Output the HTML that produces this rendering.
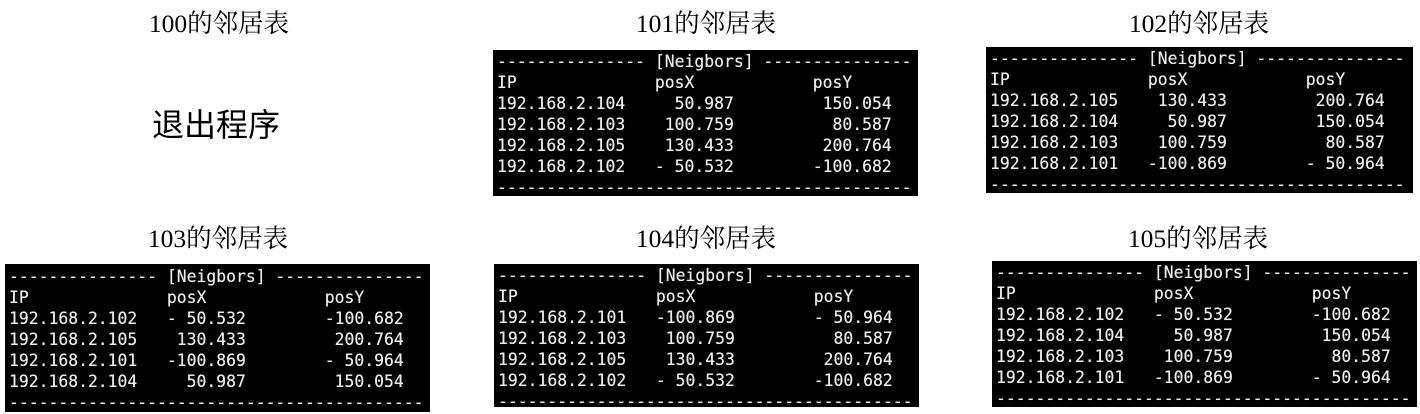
<!DOCTYPE html>
<html><head><meta charset="utf-8"><style>
body{margin:0;width:1420px;height:414px;background:#fff;position:relative;overflow:hidden}
.t{position:absolute;font-family:"Liberation Serif","Noto Serif CJK SC",serif;font-size:25.5px;line-height:28px;color:#000;transform:translateX(-50%);white-space:nowrap}
.b{position:absolute;background:#000;color:#ececec;font-family:"DejaVu Sans Mono",monospace;font-size:16.4px;line-height:21px;margin:0;padding:1px 0 0 4px;box-sizing:border-box;white-space:pre;overflow:hidden;width:425px;height:146px;text-shadow:0 0 0.4px #ececec}
.q{position:absolute;left:152px;top:106px;font-family:"Liberation Sans","Noto Sans CJK SC",sans-serif;font-size:32px;line-height:38px;color:#000}
</style></head><body>
<div class="t" style="left:219px;top:10px">100的邻居表</div>
<div class="t" style="left:706px;top:10px">101的邻居表</div>
<div class="t" style="left:1199px;top:10px">102的邻居表</div>
<div class="t" style="left:218px;top:225px">103的邻居表</div>
<div class="t" style="left:706px;top:225px">104的邻居表</div>
<div class="t" style="left:1198px;top:225px">105的邻居表</div>
<div class="q">退出程序</div>
<pre class="b" style="left:493px;top:50px">--------------- [Neigbors] ---------------
IP              posX            posY
192.168.2.104     50.987         150.054
192.168.2.103    100.759          80.587
192.168.2.105    130.433         200.764
192.168.2.102   - 50.532        -100.682
------------------------------------------</pre>
<pre class="b" style="left:986px;top:47px;width:427px">--------------- [Neigbors] ---------------
IP              posX            posY
192.168.2.105    130.433         200.764
192.168.2.104     50.987         150.054
192.168.2.103    100.759          80.587
192.168.2.101   -100.869        - 50.964
------------------------------------------</pre>
<pre class="b" style="left:5px;top:264px;height:148px;padding-top:2px">--------------- [Neigbors] ---------------
IP              posX            posY
192.168.2.102   - 50.532        -100.682
192.168.2.105    130.433         200.764
192.168.2.101   -100.869        - 50.964
192.168.2.104     50.987         150.054
------------------------------------------</pre>
<pre class="b" style="left:494px;top:264px;height:143px">--------------- [Neigbors] ---------------
IP              posX            posY
192.168.2.101   -100.869        - 50.964
192.168.2.103    100.759          80.587
192.168.2.105    130.433         200.764
192.168.2.102   - 50.532        -100.682
------------------------------------------</pre>
<pre class="b" style="left:992px;top:261px">--------------- [Neigbors] ---------------
IP              posX            posY
192.168.2.102   - 50.532        -100.682
192.168.2.104     50.987         150.054
192.168.2.103    100.759          80.587
192.168.2.101   -100.869        - 50.964
------------------------------------------</pre>
</body></html>
